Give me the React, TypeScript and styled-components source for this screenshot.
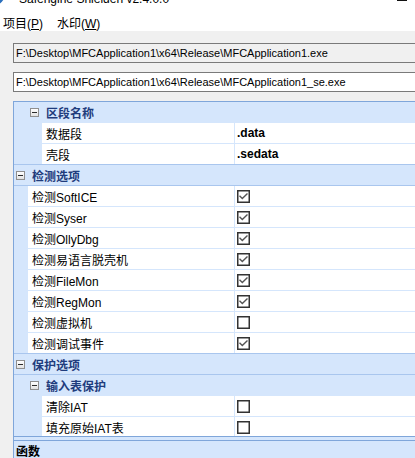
import React from "react";
import styled, { createGlobalStyle } from "styled-components";

const LIGHT = "#d5e6fc";
const MID = "#a9c6ee";
const BORDER = "#7fa6da";

const GlobalStyle = createGlobalStyle`
  html, body { margin: 0; padding: 0; background: #f0f0f0; overflow: hidden; }
  * { box-sizing: border-box; }
`;

const Window = styled.div`
  width: 415px;
  height: 458px;
  overflow: hidden;
  display: flex;
  flex-direction: column;
  font-family: "Liberation Sans", "Noto Sans CJK SC", sans-serif;
  color: #000;
`;

const TitleBar = styled.div`
  flex: none;
  height: 12px;
  background: #fff;
  display: flex;
  align-items: flex-start;
  overflow: hidden;
`;

const AppIcon = styled.svg`
  flex: none;
  margin: -11px 0 0 -11px;
`;

const TitleText = styled.div`
  margin: -8px 0 0 14px;
  font-size: 12px;
  line-height: 14px;
  white-space: nowrap;
`;

const Spacer = styled.div`
  flex: 1;
`;

const MinimizeGlyph = styled.div`
  width: 10px;
  height: 1px;
  background: #111;
  margin-right: 8px;
`;

const MenuBar = styled.div`
  flex: none;
  height: 19px;
  background: #fff;
  display: flex;
  align-items: center;
  padding: 1px 0 0 3px;
  gap: 14px;
  font-size: 12px;
`;

const MenuItem = styled.span`
  white-space: nowrap;
`;

const Content = styled.div`
  flex: 1;
  display: flex;
  flex-direction: column;
  gap: 9px;
  padding: 12px 0 0 13px;
  background: #f0f0f0;
  min-height: 0;
`;

const PathField = styled.div<{ $readOnly?: boolean }>`
  flex: none;
  height: 20px;
  margin-right: -20px;
  border: 1px solid #7a7a7a;
  border-right: none;
  background: ${(p) => (p.$readOnly ? "#f0f0f0" : "#fff")};
  padding-left: 2px;
  font-size: 11px;
  line-height: 18px;
  white-space: nowrap;
  overflow: hidden;
`;

const Grid = styled.div`
  flex: 1;
  min-height: 0;
  margin-right: -20px;
  border-top: 1px solid ${BORDER};
  border-left: 1px solid ${BORDER};
  background: ${LIGHT};
  display: flex;
  flex-direction: column;
  font-size: 12px;
`;

const List = styled.div`
  flex: none;
  height: 335px;
  overflow: hidden;
  border-bottom: 1px solid ${BORDER};
  display: flex;
  flex-direction: column;
`;

const Row = styled.div<{ $sep: string }>`
  flex: none;
  height: 21px;
  display: flex;
  align-items: stretch;
  border-bottom: 1px solid ${(p) => p.$sep};
`;

const GroupRow = styled(Row)<{ $indent: number }>`
  align-items: center;
  padding-left: ${(p) => p.$indent}px;
  background: ${LIGHT};
  font-weight: bold;
  color: #1f3c7d;
  white-space: nowrap;
`;

const Toggle = styled.span`
  flex: none;
  width: 9px;
  height: 9px;
  margin-right: 7px;
  border: 1px solid #8f8f8f;
  background: linear-gradient(#ffffff, #e2e2e2);
  display: flex;
  align-items: center;
  justify-content: center;
  &::after {
    content: "";
    width: 5px;
    height: 1px;
    background: #2b2b2b;
  }
`;

const Gutter = styled.div<{ $width: number }>`
  flex: none;
  width: ${(p) => p.$width}px;
  background: ${LIGHT};
`;

const NameCell = styled.div<{ $width: number }>`
  flex: none;
  width: ${(p) => p.$width}px;
  background: #fff;
  padding-left: 4px;
  display: flex;
  align-items: center;
  white-space: nowrap;
  overflow: hidden;
`;

const ValueCell = styled.div`
  flex: 1;
  background: #fff;
  border-left: 1px solid ${LIGHT};
  padding-left: 2px;
  display: flex;
  align-items: center;
  font-weight: bold;
  white-space: nowrap;
`;

const Description = styled.div`
  flex: 1;
  margin-top: 3px;
  border-top: 1px solid ${BORDER};
  padding: 4px 0 0 2px;
  font-weight: bold;
  font-size: 12px;
  line-height: 14px;
`;

const CheckBox = ({ checked }: { checked: boolean }) => (
  <svg width="13" height="13" viewBox="0 0 13 13">
    <rect x="0.75" y="0.75" width="11.5" height="11.5" fill="#fff" stroke="#333" strokeWidth="1.5" />
    {checked && (
      <polyline
        points="3,6.3 5.3,8.6 10,3.9"
        fill="none"
        stroke="#555"
        strokeWidth="1.4"
        strokeLinecap="square"
      />
    )}
  </svg>
);

type RowData =
  | { kind: "cat"; label: string }
  | { kind: "sub"; label: string }
  | { kind: "item"; level: 1 | 2; label: string; value?: string; check?: boolean };

const rows: RowData[] = [
  { kind: "sub", label: "区段名称" },
  { kind: "item", level: 2, label: "数据段", value: ".data" },
  { kind: "item", level: 2, label: "壳段", value: ".sedata" },
  { kind: "cat", label: "检测选项" },
  { kind: "item", level: 1, label: "检测SoftICE", check: true },
  { kind: "item", level: 1, label: "检测Syser", check: true },
  { kind: "item", level: 1, label: "检测OllyDbg", check: true },
  { kind: "item", level: 1, label: "检测易语言脱壳机", check: true },
  { kind: "item", level: 1, label: "检测FileMon", check: true },
  { kind: "item", level: 1, label: "检测RegMon", check: true },
  { kind: "item", level: 1, label: "检测虚拟机", check: false },
  { kind: "item", level: 1, label: "检测调试事件", check: true },
  { kind: "cat", label: "保护选项" },
  { kind: "sub", label: "输入表保护" },
  { kind: "item", level: 2, label: "清除IAT", check: false },
  { kind: "item", level: 2, label: "填充原始IAT表", check: false },
];

const NAME_COLUMN = 220;

export default function App() {
  return (
    <>
      <GlobalStyle />
      <Window>
        <TitleBar>
          <AppIcon width="16" height="16" viewBox="0 0 16 16">
            <defs>
              <linearGradient id="shield" x1="0" y1="0" x2="1" y2="1">
                <stop offset="0" stopColor="#5fa8e8" />
                <stop offset="1" stopColor="#1c5fb0" />
              </linearGradient>
            </defs>
            <path d="M8 0 L15 2.5 V8 C15 12 11.5 14.5 8 16 C4.5 14.5 1 12 1 8 V2.5 Z" fill="url(#shield)" />
          </AppIcon>
          <TitleText>Safengine Shielden v2.4.0.0</TitleText>
          <Spacer />
          <MinimizeGlyph />
        </TitleBar>
        <MenuBar>
          <MenuItem>
            项目(<u>P</u>)
          </MenuItem>
          <MenuItem>
            水印(<u>W</u>)
          </MenuItem>
        </MenuBar>
        <Content>
          <PathField $readOnly>F:\Desktop\MFCApplication1\x64\Release\MFCApplication1.exe</PathField>
          <PathField>F:\Desktop\MFCApplication1\x64\Release\MFCApplication1_se.exe</PathField>
          <Grid>
            <List>
              {rows.map((r, i) => {
                const next = rows[i + 1];
                const sep = r.kind === "cat" || (next && next.kind === "cat") ? MID : LIGHT;
                if (r.kind === "cat" || r.kind === "sub") {
                  return (
                    <GroupRow key={i} $sep={sep} $indent={r.kind === "cat" ? 2 : 16}>
                      <Toggle />
                      {r.label}
                    </GroupRow>
                  );
                }
                const gutter = r.level === 1 ? 14 : 28;
                return (
                  <Row key={i} $sep={sep}>
                    <Gutter $width={gutter} />
                    <NameCell $width={NAME_COLUMN - gutter}>{r.label}</NameCell>
                    <ValueCell>
                      {r.value !== undefined ? r.value : <CheckBox checked={!!r.check} />}
                    </ValueCell>
                  </Row>
                );
              })}
            </List>
            <Description>函数</Description>
          </Grid>
        </Content>
      </Window>
    </>
  );
}
